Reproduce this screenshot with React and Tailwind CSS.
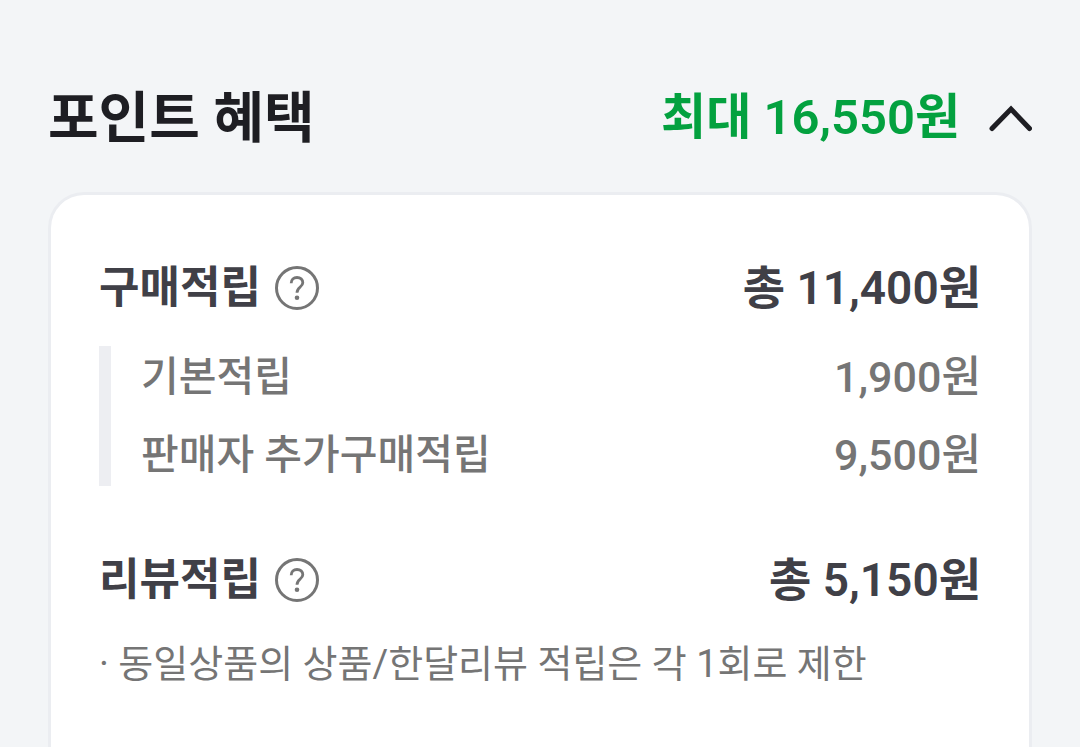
function HelpButton({ label }) {
  return (
    <button type="button" aria-label={label} className="shrink-0">
      <svg width="44" height="44" viewBox="0 0 44 44" fill="none" stroke="#757575">
        <circle cx="22" cy="22" r="20.5" strokeWidth="3" />
        <path d="M16.2 17.3C16.2 13.6 18.6 11.5 22 11.5s5.8 2 5.8 5.2c0 4.4-5.8 4.4-5.8 10.1" strokeWidth="2.8" />
        <circle cx="22" cy="31.8" r="2.3" fill="#757575" stroke="none" />
      </svg>
    </button>
  );
}

function SectionHeader({ title, total }) {
  return (
    <div className="flex items-center justify-between text-[#404047]">
      <div className="flex items-center gap-3.5">
        <h3 className="text-[44px] leading-[60px] font-bold">{title}</h3>
        <HelpButton label={`${title} 안내`} />
      </div>
      <strong className="text-[46px] leading-[60px] font-semibold">{total}</strong>
    </div>
  );
}

function DetailRow({ name, amount }) {
  return (
    <div className="flex items-center justify-between">
      <dt className="text-[41px]">{name}</dt>
      <dd className="text-[43px]">{amount}</dd>
    </div>
  );
}

export default function App() {
  return (
    <main className="flex min-h-screen flex-col bg-[#f3f5f7] px-12 pt-20 font-[Roboto,'Noto_Sans_CJK_KR',sans-serif]">
      <header className="flex items-center justify-between">
        <h2 className="text-[55px] leading-[76px] font-bold text-[#1e1e23]">포인트 혜택</h2>
        <div className="flex items-center gap-7">
          <strong className="text-[49px] leading-[76px] font-semibold text-[#03a13f]">최대 16,550원</strong>
          <button type="button" aria-label="혜택 접기">
            <svg width="44" height="28" viewBox="0 0 44 28" fill="none" stroke="#1e1e23" strokeWidth="5" strokeLinecap="round">
              <path d="M4 24.5 23 5l18.5 19.5" />
            </svg>
          </button>
        </div>
      </header>
      <section className="mt-9 flex-1 rounded-t-[36px] border-3 border-b-0 border-[#ebedf1] bg-white px-12 pt-[63px]">
        <SectionHeader title="구매적립" total="총 11,400원" />
        <dl className="mt-7 flex flex-col gap-4 border-l-12 border-[#edeef2] pl-[30px] leading-[62px] font-medium text-[#757575]">
          <DetailRow name="기본적립" amount="1,900원" />
          <DetailRow name="판매자 추가구매적립" amount="9,500원" />
        </dl>
        <div className="mt-16">
          <SectionHeader title="리뷰적립" total="총 5,150원" />
        </div>
        <p className="mt-6 text-[38px] leading-[60px] text-[#757575]">· 동일상품의 상품/한달리뷰 적립은 각 1회로 제한</p>
      </section>
    </main>
  );
}
